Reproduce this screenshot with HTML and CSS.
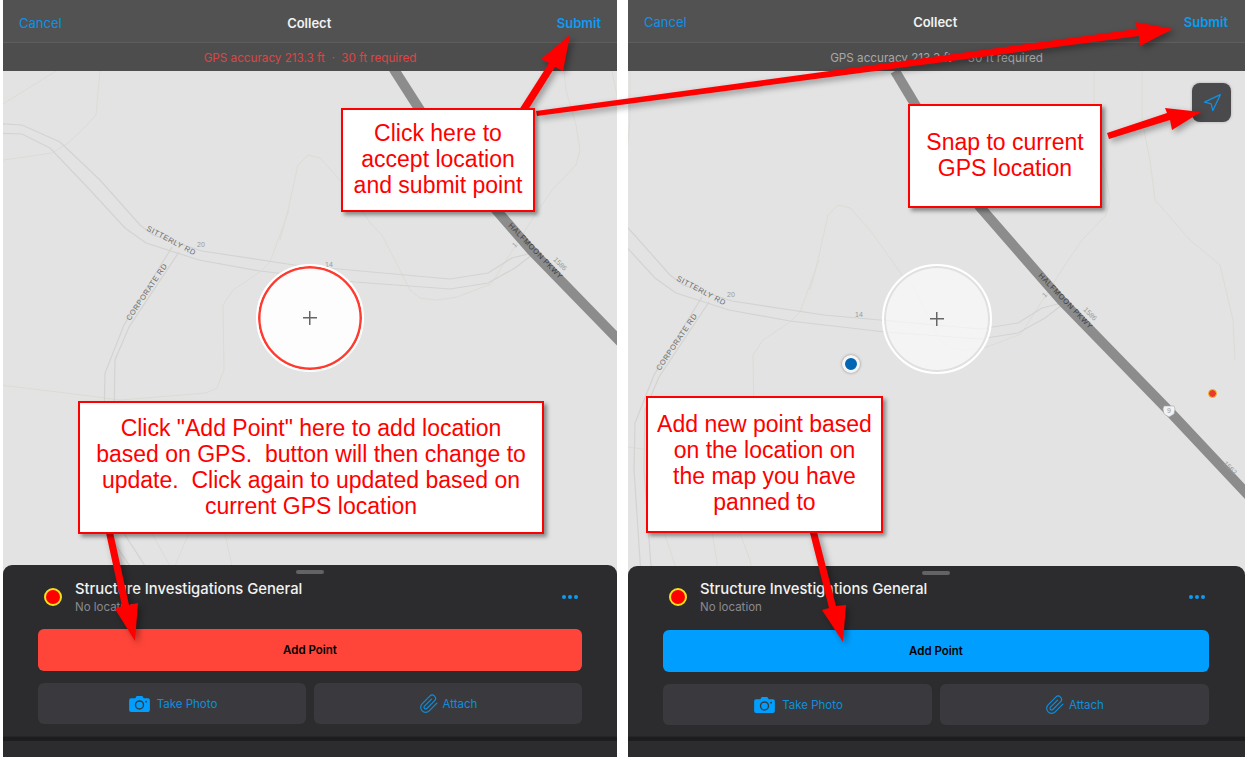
FILE: index.html
```html
<!DOCTYPE html>
<html lang="en">
<head>
<meta charset="utf-8">
<title>Collect</title>
<link rel="stylesheet" href="styles.css">
</head>
<body>
<svg class="defs" width="0" height="0" aria-hidden="true">
  <defs>
    <g id="mapart">
      <path class="faint" d="M100 0V71L96 115 84 128 68 143 52 153-10 162"/>
      <path class="faint" d="M56 71-10 112"/>
      <path class="faint" d="M564 0V71L566 90 576 125 580 150 576 165 552 190 535 215 491 284"/>
      <path class="faint" d="M612 0V71L620 110 625 150 660 190 690 215 703 270 705 310"/>
      <path class="faint" d="M280 240 288 210 298 165 308 155 320 158 340 180 372 225 382 235 410 290 420 298 437 300 457 297 491 284"/>
      <path class="faint" d="M289 210 270 262 260 272 233 290 223 305 224 370 217 388 206 393 120 400 90 396 0 385"/>
      <path class="faint" d="M130 470 150 530 170 566M180 470 190 530 175 566M205 470 220 510 232 566"/>
      <path class="road" d="M-10 123 22 125 60 142 100 180 140 225 153 235 202 251 294 265 450 279 488 273 512 258 532 253"/>
      <path class="road" d="M-10 133 22 134 50 148 90 190 125 228 146 243 199 260 260 271 355 282 450 289 488 283 515 268 532 255"/>
      <path class="road" d="M172 247 124 325 105 373 104 420 112 540 130 566"/>
      <path class="road" d="M179 252 129 327 115 360 114 420 122 530 145 566"/>
      <path class="highway" d="M365 21 395 71 450 157 531 250 641 363 720 447"/>
      <text class="label" transform="translate(146 230) rotate(28)">SITTERLY RD</text>
      <text class="label" transform="translate(130 321) rotate(-56)">CORPORATE RD</text>
      <text class="label dark" transform="translate(508 226) rotate(46)">HALFMOON PKWY</text>
      <text class="num" x="197" y="247">20</text>
      <text class="num" x="325" y="267">14</text>
      <text class="num" transform="translate(553 260) rotate(45)">1586</text>
      <text class="num" transform="translate(515 248) rotate(-45)">1</text>
      <text class="num" transform="translate(693 414) rotate(45)">1562</text>
      <path class="shield" d="M634 356h10l1 3-1 5-5 3-5-3-1-5z"/>
      <text class="num" x="637" y="363">9</text>
    </g>
  </defs>
</svg>

<main class="page">
  <section class="phone phone-left">
    <header class="nav">
      <a class="nav-link">Cancel</a>
      <h1 class="nav-title">Collect</h1>
      <a class="nav-link nav-submit">Submit</a>
    </header>
    <div class="status status-error">GPS accuracy 213.3 ft &nbsp;·&nbsp; 30 ft required</div>
    <div class="map">
      <svg class="map-art" viewBox="3 71 614 494" preserveAspectRatio="none"><use href="#mapart"/></svg>
      <div class="reticle reticle-error"><span class="plus"></span></div>
    </div>
    <div class="sheet">
      <div class="handle"></div>
      <div class="sheet-head">
        <span class="marker"></span>
        <div class="sheet-text">
          <div class="sheet-title">Structure Investigations General</div>
          <div class="sheet-sub">No location</div>
        </div>
        <div class="dots"><i></i><i></i><i></i></div>
      </div>
      <button class="primary primary-red">Add Point</button>
      <div class="actions">
        <button class="action action-photo">
          <svg class="ic-camera" viewBox="0 0 22 17"><path fill-rule="evenodd" d="M2 2.5h4.5L8 0h6l1.500 2.500H20a2 2 0 0 1 2 2V15a2 2 0 0 1-2 2H2a2 2 0 0 1-2-2V4.500a2 2 0 0 1 2-2zM11 4.500a5 5 0 1 0 0 10 5 5 0 0 0 0-10zM11 6a3.500 3.500 0 1 1 0 7 3.500 3.500 0 0 1 0-7zM18 5a1 1 0 1 0 0 2 1 1 0 0 0 0-2z"/></svg>
          Take Photo
        </button>
        <button class="action">
          <svg class="ic-clip" viewBox="0 0 24 24"><path d="M21.440 11.050l-9.190 9.190a6 6 0 0 1-8.490-8.490l9.190-9.190a4 4 0 0 1 5.660 5.660l-9.200 9.190a2 2 0 0 1-2.830-2.830l8.490-8.480"/></svg>
          Attach
        </button>
      </div>
      <div class="sheet-rule"></div>
    </div>
  </section>

  <section class="phone phone-right">
    <header class="nav">
      <a class="nav-link">Cancel</a>
      <h1 class="nav-title">Collect</h1>
      <a class="nav-link nav-submit">Submit</a>
    </header>
    <div class="status">GPS accuracy 213.3 ft &nbsp;·&nbsp; 30 ft required</div>
    <div class="map">
      <svg class="map-art" viewBox="98 21 617 495" preserveAspectRatio="none"><use href="#mapart"/></svg>
      <div class="reticle"><span class="plus"></span></div>
      <span class="pin pin-blue"></span>
      <span class="pin pin-red"></span>
      <button class="locate">
        <svg viewBox="0 0 24 24"><path d="M3 11 22 2 13 21 11 13z"/></svg>
      </button>
    </div>
    <div class="sheet">
      <div class="handle"></div>
      <div class="sheet-head">
        <span class="marker"></span>
        <div class="sheet-text">
          <div class="sheet-title">Structure Investigations General</div>
          <div class="sheet-sub">No location</div>
        </div>
        <div class="dots"><i></i><i></i><i></i></div>
      </div>
      <button class="primary">Add Point</button>
      <div class="actions">
        <button class="action action-photo">
          <svg class="ic-camera" viewBox="0 0 22 17"><path fill-rule="evenodd" d="M2 2.5h4.5L8 0h6l1.500 2.500H20a2 2 0 0 1 2 2V15a2 2 0 0 1-2 2H2a2 2 0 0 1-2-2V4.500a2 2 0 0 1 2-2zM11 4.500a5 5 0 1 0 0 10 5 5 0 0 0 0-10zM11 6a3.500 3.500 0 1 1 0 7 3.500 3.500 0 0 1 0-7zM18 5a1 1 0 1 0 0 2 1 1 0 0 0 0-2z"/></svg>
          Take Photo
        </button>
        <button class="action">
          <svg class="ic-clip" viewBox="0 0 24 24"><path d="M21.440 11.050l-9.190 9.190a6 6 0 0 1-8.490-8.490l9.190-9.190a4 4 0 0 1 5.660 5.660l-9.200 9.190a2 2 0 0 1-2.830-2.830l8.490-8.480"/></svg>
          Attach
        </button>
      </div>
      <div class="sheet-rule"></div>
    </div>
  </section>

  <svg class="arrows" viewBox="0 0 1247 757">
    <g class="arrow-set">
      <path d="M519 110 549 63 541 59 570 35 563 71 555 67 526 113z"/>
      <path d="M536 111 1137 29 1135 22 1173 29 1140 46 1139 36 537 116z"/>
      <path d="M1107 133 1167 113 1165 108 1201 112 1172 130 1170 120 1109 139z"/>
      <path d="M106 533 122 606 115 609 135 641 138 603 129 605 113 532z"/>
      <path d="M810 533 829 608 822 610 843 642 846 605 836 606 817 532z"/>
    </g>
  </svg>

  <div class="note note-submit">Click here to<br>accept location<br>and submit point</div>
  <div class="note note-add">Click "Add Point" here to add location<br>based on GPS.&nbsp; button will then change to<br>update.&nbsp; Click again to updated based on<br>current GPS location</div>
  <div class="note note-snap">Snap to current<br>GPS location</div>
  <div class="note note-new">Add new point based<br>on the location on<br>the map you have<br>panned to</div>
</main>
</body>
</html>
```
FILE: styles.css
```css
* { box-sizing: border-box; }
html, body { margin: 0; padding: 0; background: #fff; }
.defs { position: absolute; }

.page {
  position: relative;
  width: 1247px;
  height: 757px;
  overflow: hidden;
  display: flex;
  font-family: Inter, "Noto Sans", sans-serif;
}

.phone {
  display: flex;
  flex-direction: column;
  height: 757px;
  background: #e3e3e3;
}
.phone-left { width: 614px; margin-left: 3px; }
.phone-right { width: 617px; margin-left: 11px; }

.nav {
  height: 43px;
  padding: 3px 16px 0;
  display: flex;
  align-items: center;
  justify-content: space-between;
  background: #525252;
  border-bottom: 1px solid #5e5e5e;
}
.phone-right .nav { padding: 2px 17px 0 16px; }
.nav-link { font-size: 13px; color: #0d93e6; }
.nav-submit { font-weight: 600; color: #0a9cf5; }
.nav-title { margin: 0; font-size: 13px; font-weight: 600; color: #f2f2f2; }

.status {
  height: 28px;
  padding-top: 1px;
  display: flex;
  align-items: center;
  justify-content: center;
  font-size: 11.700px;
  color: #a8a8a8;
  background: #4d4d4d;
  white-space: pre;
}
.status-error { color: #dd4545; }

.map {
  position: relative;
  flex: 1;
  display: grid;
  place-items: center;
  overflow: hidden;
}
.map-art {
  position: absolute;
  inset: 0;
  width: 100%;
  height: 100%;
}
.faint { fill: none; stroke: #dcdcd5; stroke-width: 1; }
.road { fill: none; stroke: #d3d3d1; stroke-width: 1.200; }
.highway { fill: none; stroke: #8c8c8c; stroke-width: 10; stroke-linejoin: round; }
.label {
  font: 7.500px "Liberation Sans", sans-serif;
  letter-spacing: .6px;
  fill: #6a6a6a;
}
.label.dark { fill: #3f3f3f; }
.num { font: 7px "Liberation Sans", sans-serif; fill: #999; }
.shield { fill: #f2f2f2; stroke: #aaa; stroke-width: .6; }

.reticle {
  position: relative;
  width: 110px;
  height: 110px;
  border-radius: 50%;
  border: 2px solid #fff;
  background: rgba(255, 255, 255, .62);
  box-shadow: inset 0 0 0 2px #e0e0e0;
  display: grid;
  place-items: center;
}
.reticle-error {
  width: 108px;
  height: 108px;
  background: #fdfdfd;
  box-shadow: inset 0 0 0 2.500px #ff3b30;
}
.plus {
  position: relative;
  width: 14px;
  height: 14px;
  background:
    linear-gradient(#666, #666) center / 14px 1.500px no-repeat,
    linear-gradient(#666, #666) center / 1.500px 14px no-repeat;
}

.pin { position: absolute; border-radius: 50%; }
.pin-blue {
  left: 214px;
  top: 284px;
  width: 18px;
  height: 18px;
  background: #0066b3;
  border: 3px solid #f5f5f5;
  box-shadow: 0 0 3px rgba(0, 0, 0, .4);
}
.pin-red {
  left: 580px;
  top: 318px;
  width: 9px;
  height: 9px;
  background: #e8382f;
  border: 1px solid #f4c21c;
}
.locate {
  position: absolute;
  right: 14px;
  top: 12px;
  width: 39px;
  height: 39px;
  padding: 0;
  border: 0;
  border-radius: 8px;
  background: #4a4a4c;
  box-shadow: 0 0 3px rgba(0, 0, 0, .25);
  display: grid;
  place-items: center;
}
.locate svg {
  width: 20px;
  height: 20px;
  fill: none;
  stroke: #0d93e6;
  stroke-width: 1.500;
  stroke-linejoin: round;
}

.sheet {
  height: 192px;
  padding: 5px 35px 0;
  background: #2c2c2e;
  border-radius: 9px 9px 0 0;
  position: relative;
}
.phone-right .sheet { height: 191px; padding-right: 36px; }
.handle {
  width: 28px;
  height: 4px;
  margin: 0 auto;
  border-radius: 2px;
  background: #636366;
}
.sheet-head {
  height: 55px;
  display: flex;
  align-items: flex-start;
  padding: 0 2px 0 6px;
}
.marker {
  width: 18px;
  height: 18px;
  flex: none;
  border-radius: 50%;
  background: #f00;
  border: 2px solid #f4e21c;
  margin-top: 14px;
}
.sheet-text { flex: 1; margin: 5px 0 0 13px; }
.phone-right .sheet-text { margin-top: 4px; }
.phone-right .marker { margin-top: 13px; }
.phone-right .dots { margin-top: 20px; }
.sheet-title { font-size: 14.800px; font-weight: 500; line-height: 20px; color: #f2f2f2; }
.sheet-sub { font-size: 11.500px; line-height: 17px; color: #8a8a8e; }
.dots { display: flex; gap: 2px; margin: 21px 2px 0 0; }
.dots i { width: 4px; height: 4px; border-radius: 50%; background: #0a9cf5; }

.primary {
  display: block;
  width: 100%;
  height: 42px;
  padding: 0;
  border: 0;
  border-radius: 6px;
  background: #009fff;
  color: #000;
  font: 600 11.500px Inter, "Noto Sans", sans-serif;
}
.primary-red { background: #ff453a; }
.actions {
  display: grid;
  grid-template-columns: 1fr 1fr;
  gap: 8px;
  margin-top: 12px;
}
.action {
  height: 41px;
  padding: 0;
  border: 0;
  border-radius: 6px;
  background: #3a3a3e;
  color: #0d8fdd;
  font: 400 11.500px Inter, "Noto Sans", sans-serif;
  display: flex;
  align-items: center;
  justify-content: center;
  gap: 7px;
}
.action-photo { padding-left: 2px; }
.ic-camera { width: 21px; height: 16px; fill: #009fff; }
.ic-clip {
  width: 20px;
  height: 20px;
  margin-right: -3px;
  fill: none;
  stroke: #0d8fdd;
  stroke-width: 1.400;
  stroke-linecap: round;
  stroke-linejoin: round;
}
.sheet-rule {
  position: absolute;
  left: 0;
  right: 0;
  top: 171px;
  height: 5px;
  background: #1d1d1f;
  border-top: 1px solid #252527;
}
.phone-right .sheet-rule { top: 170px; }

.arrows {
  position: absolute;
  inset: 0;
  width: 1247px;
  height: 757px;
  pointer-events: none;
}
.arrow-set {
  fill: #f00;
  filter: drop-shadow(3px 3px 3px rgba(0, 0, 0, .35));
}

.note {
  position: absolute;
  display: flex;
  align-items: center;
  justify-content: center;
  text-align: center;
  white-space: nowrap;
  background: #fff;
  border: 2px solid #f00;
  box-shadow: 3px 3px 4px rgba(0, 0, 0, .4);
  padding-bottom: 2px;
  color: #f00;
  font: 23px/26px "Liberation Sans", Arial, sans-serif;
}
.note-submit { left: 341px; top: 108px; width: 194px; height: 104px; }
.note-add { left: 78px; top: 401px; width: 466px; height: 133px; }
.note-snap { left: 908px; top: 104px; width: 194px; height: 104px; }
.note-new { left: 646px; top: 396px; width: 237px; height: 137px; padding-bottom: 4px; }
```
